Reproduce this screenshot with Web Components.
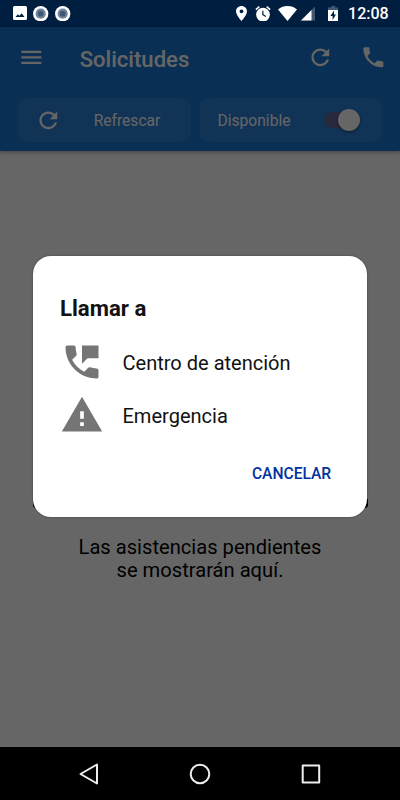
<!DOCTYPE html>
<html lang="es">
<head>
<meta charset="utf-8">
<title>Solicitudes</title>
<style>
  body {
    margin: 0;
    font-family: Roboto, "Liberation Sans", sans-serif;
  }
</style>
</head>
<body>
<app-screen>
  <status-bar slot="status">12:08</status-bar>
  <app-header slot="header">
    <span slot="title">Solicitudes</span>
    <action-card slot="cards" class="refresh">
      <md-icon name="refresh" slot="start"></md-icon>Refrescar
    </action-card>
    <action-card slot="cards" class="available">
      Disponible<toggle-switch slot="end"></toggle-switch>
    </action-card>
  </app-header>
  <empty-state>Las asistencias pendientes<br>se mostrarán aquí.</empty-state>
  <call-dialog slot="dialog">
    <span slot="title">Llamar a</span>
    <call-option icon="phone-msg">Centro de atención</call-option>
    <call-option icon="warning">Emergencia</call-option>
    <span slot="action">CANCELAR</span>
  </call-dialog>
  <nav-bar slot="nav"></nav-bar>
</app-screen>

<script>
const icons = {
  menu: 'M3 18h18v-2H3v2zm0-5h18v-2H3v2zm0-7v2h18V6H3z',
  refresh: 'M17.65 6.35C16.2 4.9 14.21 4 12 4c-4.42 0-7.99 3.58-7.99 8s3.57 8 7.99 8c3.73 0 6.84-2.55 7.73-6h-2.08c-.82 2.33-3.04 4-5.65 4-3.31 0-6-2.69-6-6s2.69-6 6-6c1.66 0 3.14.69 4.22 1.78L13 11h7V4l-2.35 2.35z',
  phone: 'M6.62 10.79c1.44 2.83 3.76 5.14 6.59 6.59l2.2-2.2c.27-.27.67-.36 1.02-.24 1.12.37 2.33.57 3.57.57.55 0 1 .45 1 1V20c0 .55-.45 1-1 1-9.39 0-17-7.61-17-17 0-.55.45-1 1-1h3.5c.55 0 1 .45 1 1 0 1.25.2 2.45.57 3.57.11.35.03.74-.25 1.02l-2.2 2.2z',
  'phone-msg': 'M20 15.5c-1.25 0-2.45-.2-3.57-.57-.35-.11-.74-.03-1.02.24l-2.2 2.2c-2.83-1.44-5.15-3.75-6.59-6.58l2.2-2.21c.28-.27.36-.66.25-1.01C8.7 6.45 8.5 5.25 8.5 4c0-.55-.45-1-1-1H4c-.55 0-1 .45-1 1 0 9.39 7.61 17 17 17 .55 0 1-.45 1-1v-3.5c0-.55-.45-1-1-1zM12 3v10l3-3h6V3h-9z',
  warning: 'M1 21h22L12 2 1 21zm12-3h-2v-2h2v2zm0-4h-2v-4h2v4z'
}

// attaches an open shadow root with the given markup
class BaseElement extends HTMLElement {
  constructor() {
    super();
    const template = document.createElement('template')
    template.innerHTML = this.render()
    this.attachShadow({mode: 'open'})
    this.shadowRoot.appendChild(template.content.cloneNode(true))
  }
}

// <md-icon name="refresh">
class MdIcon extends BaseElement {
  render() {
    return `
<style>
  :host { display: block; width: 26.67px; height: 26.67px; flex: none; }
  svg { display: block; width: 100%; height: 100%; fill: currentColor; }
</style>
<svg viewBox="0 0 24 24"><path/></svg>`
  }

  connectedCallback() {
    this.shadowRoot.querySelector('path').setAttribute('d', icons[this.getAttribute('name')])
  }
}

class AppScreen extends BaseElement {
  render() {
    return `
<style>
  :host {
    display: flex;
    flex-direction: column;
    position: relative;
    width: 400px;
    height: 800px;
    overflow: hidden;
    background: #fff;
  }
  main { flex: 1; }
  .scrim {
    position: absolute;
    inset: 26.67px 0 53px;
    background: rgba(0, 0, 0, .6);
  }
  .overlay { position: absolute; left: 33.3px; top: 256px; }
</style>
<slot name="status"></slot>
<slot name="header"></slot>
<main><slot></slot></main>
<slot name="nav"></slot>
<div class="scrim"></div>
<div class="overlay"><slot name="dialog"></slot></div>`
  }
}

class StatusBar extends BaseElement {
  render() {
    return `
<style>
  :host {
    display: flex;
    align-items: center;
    box-sizing: border-box;
    height: 26.67px;
    padding: 0 11.3px 0 13px;
    background: #001e40;
    color: #fff;
    font-size: 16px;
    font-weight: 500;
    line-height: 20px;
  }
  svg { display: block; flex: none; fill: #fff; }
  .left, .right { display: flex; align-items: center; }
  .left { gap: 6.4px; }
  .right { margin-left: auto; }
  .time { margin: 2px 0 0 10px; }
</style>
<div class="left">
  <svg width="14" height="14" viewBox="0 0 14 14"><path fill-rule="evenodd" d="M1.5 0h11A1.5 1.5 0 0 1 14 1.5v11a1.5 1.5 0 0 1-1.5 1.5h-11A1.5 1.5 0 0 1 0 12.5v-11A1.5 1.5 0 0 1 1.5 0zM2.5 11h9L8.7 7.2 6.5 9.8 4.9 8.2z"/></svg>
  <svg width="15.4" height="15.4" viewBox="0 0 16 16"><circle cx="8" cy="8" r="8"/><circle cx="8" cy="8" r="5.3" fill="#71859d"/><circle cx="8" cy="8" r="3" fill="#405874"/></svg>
  <svg width="15.4" height="15.4" viewBox="0 0 16 16"><circle cx="8" cy="8" r="8"/><circle cx="8" cy="8" r="5.3" fill="#71859d"/><circle cx="8" cy="8" r="3" fill="#405874"/></svg>
</div>
<div class="right">
  <svg width="11" height="15" viewBox="5 2 14 20" preserveAspectRatio="none"><path d="M12 2C8.13 2 5 5.13 5 9c0 5.25 7 13 7 13s7-7.75 7-13c0-3.87-3.13-7-7-7zm0 9.500a2.500 2.500 0 1 1 0-5 2.500 2.500 0 0 1 0 5z"/></svg>
  <svg style="margin-left:8.5px" width="16" height="15.5" viewBox="2 1.8 20 20.2"><path d="M22 5.72l-4.6-3.86-1.29 1.53 4.6 3.86L22 5.72zM7.88 3.39L6.6 1.86 2 5.71l1.29 1.53 4.59-3.85zM12 4a9 9 0 1 0 0 18 9 9 0 0 0 0-18zm-1 4h1.600v4.700l3.500 2.100-.8 1.400L11 13.500z"/></svg>
  <svg style="margin-left:6.5px" width="19" height="15" viewBox="0 0 19 15"><path d="M9.5 15L0 3.4C2.7 1.2 6 0 9.5 0S16.3 1.2 19 3.4z"/></svg>
  <svg style="margin-left:4px" width="14.5" height="14.5" viewBox="0 0 14.5 14.5"><path fill="#405874" d="M14.5 0v14.5H0z"/><path d="M10.500 4v10.500H0z"/></svg>
  <svg style="margin-left:12.5px" width="10.4" height="15.6" viewBox="0 0 10.4 15.6"><path fill="#405874" d="M3.3 0h3.8v1.5h3.3v3H0v-3h3.3z"/><path fill-rule="evenodd" d="M0 4h10.4v10.8a.8.8 0 0 1-.8.8H.8a.8.8 0 0 1-.8-.8zM6 4.5L2.4 10h2.200v4L8 8.500H6z"/></svg>
  <span class="time"><slot></slot></span>
</div>`
  }
}

class AppHeader extends BaseElement {
  render() {
    return `
<style>
  :host {
    display: block;
    box-sizing: border-box;
    height: 124.5px;
    background: #1976d2;
    color: #fff;
    box-shadow: 0 1px 4px rgba(0, 0, 0, .4);
  }
  .toolbar {
    display: flex;
    align-items: center;
    height: 62px;
    padding: 0 13px 0 18px;
  }
  .title {
    flex: 1;
    margin-left: 35px;
    padding-top: 2px;
    font-size: 22.1px;
    font-weight: 500;
  }
  .phone { margin-left: 26.6px; }
  .cards {
    display: flex;
    gap: 9px;
    padding: 9px 17.5px 0;
  }
</style>
<div class="toolbar">
  <md-icon name="menu"></md-icon>
  <div class="title"><slot name="title"></slot></div>
  <md-icon name="refresh"></md-icon>
  <md-icon name="phone" class="phone"></md-icon>
</div>
<div class="cards"><slot name="cards"></slot></div>`
  }
}

class ActionCard extends BaseElement {
  render() {
    return `
<style>
  :host {
    display: flex;
    align-items: center;
    box-sizing: border-box;
    height: 44.5px;
    border-radius: 9px;
    background: rgba(255, 255, 255, .08);
    font-size: 15.6px;
  }
  :host(.refresh) { width: 173.5px; padding-left: 17.7px; }
  :host(.available) { width: 182px; padding: 0 21.5px 0 17.5px; justify-content: space-between; }
  :host(.refresh) .label { margin-left: 31.8px; }
  .label { padding-top: 2px; }
</style>
<slot name="start"></slot>
<div class="label"><slot></slot></div>
<slot name="end"></slot>`
  }
}

class ToggleSwitch extends BaseElement {
  render() {
    return `
<style>
  :host { display: flex; align-items: center; width: 37px; height: 23px; }
  .track { width: 31px; height: 16px; border-radius: 8px; background: #646699; }
  .thumb {
    flex: none;
    width: 22.6px;
    height: 22.6px;
    margin-left: -17px;
    border-radius: 50%;
    background: #fff;
    box-shadow: 0 1px 3px rgba(0, 0, 0, .5);
  }
</style>
<div class="track"></div>
<div class="thumb"></div>`
  }
}

class EmptyState extends BaseElement {
  render() {
    return `
<style>
  :host { display: block; text-align: center; }
  /* only its edge shows under the dialog corners */
  .picture {
    width: 335px;
    height: 9px;
    margin: 347.5px auto 0;
    border-radius: 0 0 3px 3px;
    background: #000;
  }
  p {
    margin: 28px 0 0;
    color: #000;
    font-size: 20.15px;
    line-height: 23.4px;
  }
</style>
<div class="picture"></div>
<p><slot></slot></p>`
  }
}

class CallDialog extends BaseElement {
  render() {
    return `
<style>
  :host {
    display: flex;
    flex-direction: column;
    box-sizing: border-box;
    width: 333.4px;
    height: 261.3px;
    padding: 38px 35.5px 0 26.7px;
    border-radius: 18px;
    background: #fff;
    box-shadow: 0 0 2px rgba(0, 0, 0, .45);
    color: #111;
  }
  .title { font-size: 22.2px; font-weight: 700; line-height: 28px; }
  .options { display: flex; flex-direction: column; padding-top: 13px; }
  .action {
    align-self: flex-end;
    margin-top: 22px;
    color: #0032a0;
    font-size: 15.6px;
    font-weight: 500;
    line-height: 20px;
  }
</style>
<div class="title"><slot name="title"></slot></div>
<div class="options"><slot></slot></div>
<div class="action"><slot name="action"></slot></div>`
  }
}

// <call-option icon="warning">
class CallOption extends BaseElement {
  render() {
    return `
<style>
  :host { display: flex; align-items: center; height: 53.3px; font-size: 20.05px; }
  md-icon { width: 44px; height: 44px; color: #757575; }
  .label { margin-left: 18.5px; padding-top: 2px; }
</style>
<md-icon></md-icon>
<div class="label"><slot></slot></div>`
  }

  connectedCallback() {
    const icon = this.shadowRoot.querySelector('md-icon')
    icon.shadowRoot.querySelector('path').setAttribute('d', icons[this.getAttribute('icon')])
  }
}

class NavBar extends BaseElement {
  render() {
    return `
<style>
  :host {
    display: flex;
    align-items: center;
    justify-content: center;
    gap: 87px;
    height: 53px;
    background: #000;
  }
  svg { display: block; width: 24px; height: 24px; fill: none; stroke: #eee; stroke-width: 2; stroke-linejoin: round; }
</style>
<svg viewBox="0 0 24 24"><path d="M20 2.5v19L3.5 12z"/></svg>
<svg viewBox="0 0 24 24"><circle cx="12" cy="12" r="9.3"/></svg>
<svg viewBox="0 0 24 24"><path d="M3.7 3.5h16.5v17H3.7z"/></svg>`
  }
}

customElements.define('md-icon', MdIcon);
customElements.define('status-bar', StatusBar);
customElements.define('toggle-switch', ToggleSwitch);
customElements.define('action-card', ActionCard);
customElements.define('app-header', AppHeader);
customElements.define('empty-state', EmptyState);
customElements.define('call-option', CallOption);
customElements.define('call-dialog', CallDialog);
customElements.define('nav-bar', NavBar);
customElements.define('app-screen', AppScreen);
</script>
</body>
</html>
